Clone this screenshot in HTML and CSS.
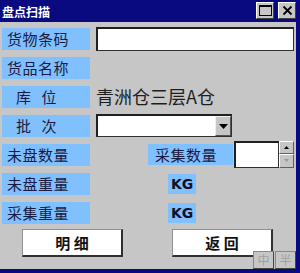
FILE: index.html
```html
<!DOCTYPE html>
<html>
<head>
<meta charset="utf-8">
<link rel="stylesheet" href="styles.css">
</head>
<body>
<div class="window">
  <div class="titlebar">
    <span class="title">盘点扫描</span>
    <div class="tbtns">
      <div class="tbtn"><svg width="13" height="11" viewBox="0 0 13 11"><rect x="0.5" y="0.5" width="12" height="10" fill="none" stroke="#000" stroke-width="1"/><rect x="0" y="0" width="13" height="2" fill="#000"/></svg></div>
      <div class="tbtn"><svg width="11" height="11" viewBox="0 0 11 11"><path d="M1.5 1.5 L9.5 9.5 M9.5 1.5 L1.5 9.5" stroke="#000" stroke-width="1.8"/></svg></div>
    </div>
  </div>
  <div class="body">
    <div class="row">
      <div class="lbl">货物条码</div>
      <div class="input wide"></div>
    </div>
    <div class="row">
      <div class="lbl">货品名称</div>
    </div>
    <div class="row">
      <div class="lbl spaced"><span>库</span><span>位</span></div>
      <div class="value">青洲仓三层A仓</div>
    </div>
    <div class="row">
      <div class="lbl spaced"><span>批</span><span>次</span></div>
      <div class="select">
        <div class="sel-field"></div>
        <div class="sel-btn"><svg width="9" height="5" viewBox="0 0 9 5"><path d="M0 0 H9 L4.5 5 Z" fill="#000"/></svg></div>
      </div>
    </div>
    <div class="row">
      <div class="lbl">未盘数量</div>
      <div class="lbl lbl2">采集数量</div>
      <div class="spin">
        <div class="spin-field"></div>
        <div class="spin-btns">
          <div class="sbtn"><svg width="5" height="3" viewBox="0 0 5 3"><path d="M0 3 H5 L2.5 0 Z" fill="#000"/></svg></div>
          <div class="sbtn"><svg width="5" height="3" viewBox="0 0 5 3"><path d="M0 0 H5 L2.5 3 Z" fill="#999"/></svg></div>
        </div>
      </div>
    </div>
    <div class="row">
      <div class="lbl">未盘重量</div>
      <div class="unit">KG</div>
    </div>
    <div class="row">
      <div class="lbl">采集重量</div>
      <div class="unit">KG</div>
    </div>
    <div class="actions">
      <div class="btn">明 细</div>
      <div class="btn">返 回</div>
    </div>
  </div>
  <div class="ime">
    <div class="imebox">中</div>
    <div class="imebox">半</div>
  </div>
</div>
</body>
</html>
```

FILE: styles.css
```css
* { box-sizing: border-box; }
html, body { margin: 0; padding: 0; }
body {
  width: 300px;
  height: 273px;
  overflow: hidden;
  font-family: "Noto Sans CJK SC", "Noto Sans", sans-serif;
}
.window {
  position: relative;
  width: 300px;
  height: 273px;
  background: #c6c6c6;
  border-right: 4px solid #0a0a80;
  border-bottom: 4px solid #0a0a80;
  display: flex;
  flex-direction: column;
}
.titlebar {
  height: 22px;
  background: #0a0a80;
  display: flex;
  align-items: center;
  justify-content: space-between;
  padding-left: 2px;
}
.title {
  color: #fff;
  font-weight: bold;
  font-size: 12px;
  letter-spacing: 0;
}
.tbtns {
  display: flex;
  gap: 4px;
  margin-right: 0px;
  margin-top: -2px;
}
.tbtn {
  width: 18px;
  height: 17px;
  background: #c6c6c6;
  border-top: 1px solid #fff;
  border-left: 1px solid #fff;
  border-right: 1px solid #404040;
  border-bottom: 1px solid #404040;
  display: flex;
  align-items: center;
  justify-content: center;
}
.body {
  padding-top: 2px;
  padding-left: 2px;
  display: flex;
  flex-direction: column;
}
.row {
  height: 29px;
  display: flex;
  align-items: center;
}
.lbl {
  width: 88px;
  height: 22px;
  background: #80c0ff;
  color: #1a1a40;
  font-size: 15px;
  line-height: 22px;
  padding-left: 5px;
  letter-spacing: 0.5px;
  white-space: nowrap;
}
.lbl.spaced {
  padding-left: 14px;
  display: flex;
  gap: 10px;
}
.input {
  background: #fff;
  border: 1px solid #303030;
  border-top: 2px solid #202020;
  border-left: 2px solid #202020;
}
.wide {
  margin-left: 6px;
  width: 198px;
  height: 24px;
}
.value {
  margin-left: 6px;
  font-size: 18px;
  color: #1e1e1e;
  line-height: 22px;
  margin-top: -2px;
}
.select {
  margin-left: 6px;
  width: 136px;
  height: 23px;
  display: flex;
  background: #fff;
  border: 1px solid #303030;
  border-top: 2px solid #202020;
  border-left: 2px solid #202020;
}
.sel-field { flex: 1; }
.sel-btn {
  width: 16px;
  background: #c6c6c6;
  border-top: 1px solid #eee;
  border-left: 1px solid #eee;
  border-right: 1px solid #555;
  border-bottom: 1px solid #555;
  display: flex;
  align-items: center;
  justify-content: center;
}
.lbl2 {
  margin-left: 58px;
  width: 85px;
  padding-left: 7px;
  height: 21px;
  line-height: 21px;
}
.spin {
  margin-left: 1px;
  width: 60px;
  height: 27px;
  display: flex;
  margin-top: -1px;
}
.spin-field {
  flex: 1;
  background: #fff;
  border: 1px solid #303030;
  border-top: 2px solid #202020;
  border-left: 2px solid #202020;
}
.spin-btns {
  width: 15px;
  display: flex;
  flex-direction: column;
}
.sbtn {
  flex: 1;
  background: #c6c6c6;
  border-top: 1px solid #fff;
  border-left: 1px solid #fff;
  border-right: 1px solid #606060;
  border-bottom: 1px solid #606060;
  display: flex;
  align-items: center;
  justify-content: center;
}
.unit {
  margin-left: 78px;
  width: 28px;
  height: 20px;
  background: #80c0ff;
  font-family: "DejaVu Sans", sans-serif;
  font-size: 14px;
  font-weight: bold;
  color: #101028;
  line-height: 20px;
  padding-left: 3px;
}
.actions {
  display: flex;
  margin-top: 2px;
  padding-left: 20px;
  gap: 49px;
}
.btn {
  width: 101px;
  height: 28px;
  background: #fff;
  border-top: 1px solid #909090;
  border-left: 1px solid #909090;
  border-right: 2px solid #303030;
  border-bottom: 2px solid #303030;
  font-size: 15px;
  font-weight: bold;
  color: #111;
  display: flex;
  align-items: center;
  justify-content: center;
  white-space: pre;
}
.ime {
  position: absolute;
  right: 0;
  bottom: 0;
  display: flex;
  gap: 1px;
}
.imebox {
  width: 21px;
  height: 18px;
  background: #c6c6c6;
  border: 1px solid #444;
  border-top-color: #888;
  border-left-color: #888;
  color: #a0a0a0;
  font-size: 12px;
  line-height: 16px;
  text-align: center;
}
```
